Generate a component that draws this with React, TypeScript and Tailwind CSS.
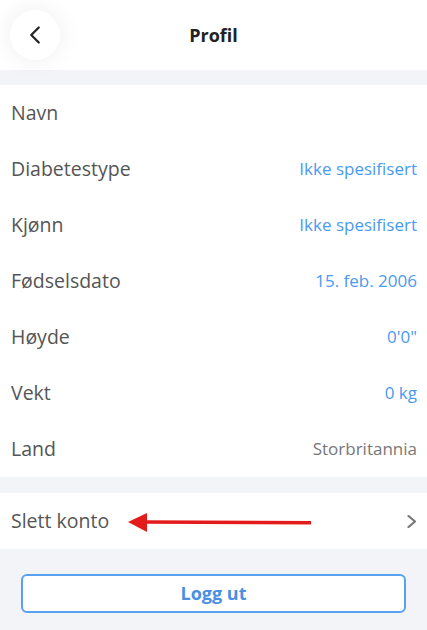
import { ChevronLeft } from 'lucide-react';

const rows = [
  { label: 'Navn', value: '', tone: '' },
  { label: 'Diabetestype', value: 'Ikke spesifisert', tone: 'blue' },
  { label: 'Kjønn', value: 'Ikke spesifisert', tone: 'blue' },
  { label: 'Fødselsdato', value: '15. feb. 2006', tone: 'blue' },
  { label: 'Høyde', value: "0'0\"", tone: 'blue' },
  { label: 'Vekt', value: '0 kg', tone: 'blue' },
  { label: 'Land', value: 'Storbritannia', tone: 'gray' },
];

export default function App() {
  return (
    <div className="w-[427px] h-[630px] bg-[#f3f4f8] overflow-hidden font-['Open_Sans',sans-serif]">
      <header className="h-[70px] bg-white flex items-center relative">
        <button className="ml-[10px] w-[50px] h-[50px] rounded-full bg-white shadow-[0_0_24px_rgba(0,0,0,0.07)] flex items-center justify-center text-[#222]">
          <ChevronLeft size={30} strokeWidth={1.8} />
        </button>
        <h1 className="absolute left-0 right-0 text-center text-[18px] font-bold text-[#222] pointer-events-none">Profil</h1>
      </header>

      <section className="mt-[15px] bg-white">
        {rows.map((r) => (
          <div key={r.label} className="h-[56px] flex items-center justify-between pl-[11px] pr-[10px]">
            <span className="text-[19.5px] text-[#555]">{r.label}</span>
            <span
              className={
                r.tone === 'blue'
                  ? 'text-[17px] text-[#4a9af0]'
                  : 'text-[17px] text-[#777]'
              }
            >
              {r.value}
            </span>
          </div>
        ))}
      </section>

      <section className="mt-[16px] bg-white relative">
        <div className="h-[56px] flex items-center justify-between pl-[11px] pr-[10px]">
          <span className="text-[19.5px] text-[#555]">Slett konto</span>
          <svg width="10" height="13" viewBox="0 0 10 13" className="mt-[1px]">
            <polyline points="1.5,1 8,6.5 1.5,12" fill="none" stroke="#777" strokeWidth="2.2" strokeLinecap="round" strokeLinejoin="round" />
          </svg>
        </div>
        <svg className="absolute left-[126px] top-[17px]" width="190" height="26" viewBox="0 0 190 26">
          <line x1="18" y1="12" x2="185" y2="12.8" stroke="#e41b1b" strokeWidth="3.5" />
          <polygon points="2,12 21,3 21,22" fill="#e41b1b" />
        </svg>
      </section>

      <div className="px-[21px] pt-[25px]">
        <button className="w-full h-[39px] bg-white border-2 border-[#5aa0f0] rounded-[6px] text-[18px] font-bold text-[#4a90e2]">
          Logg ut
        </button>
      </div>
    </div>
  );
}
